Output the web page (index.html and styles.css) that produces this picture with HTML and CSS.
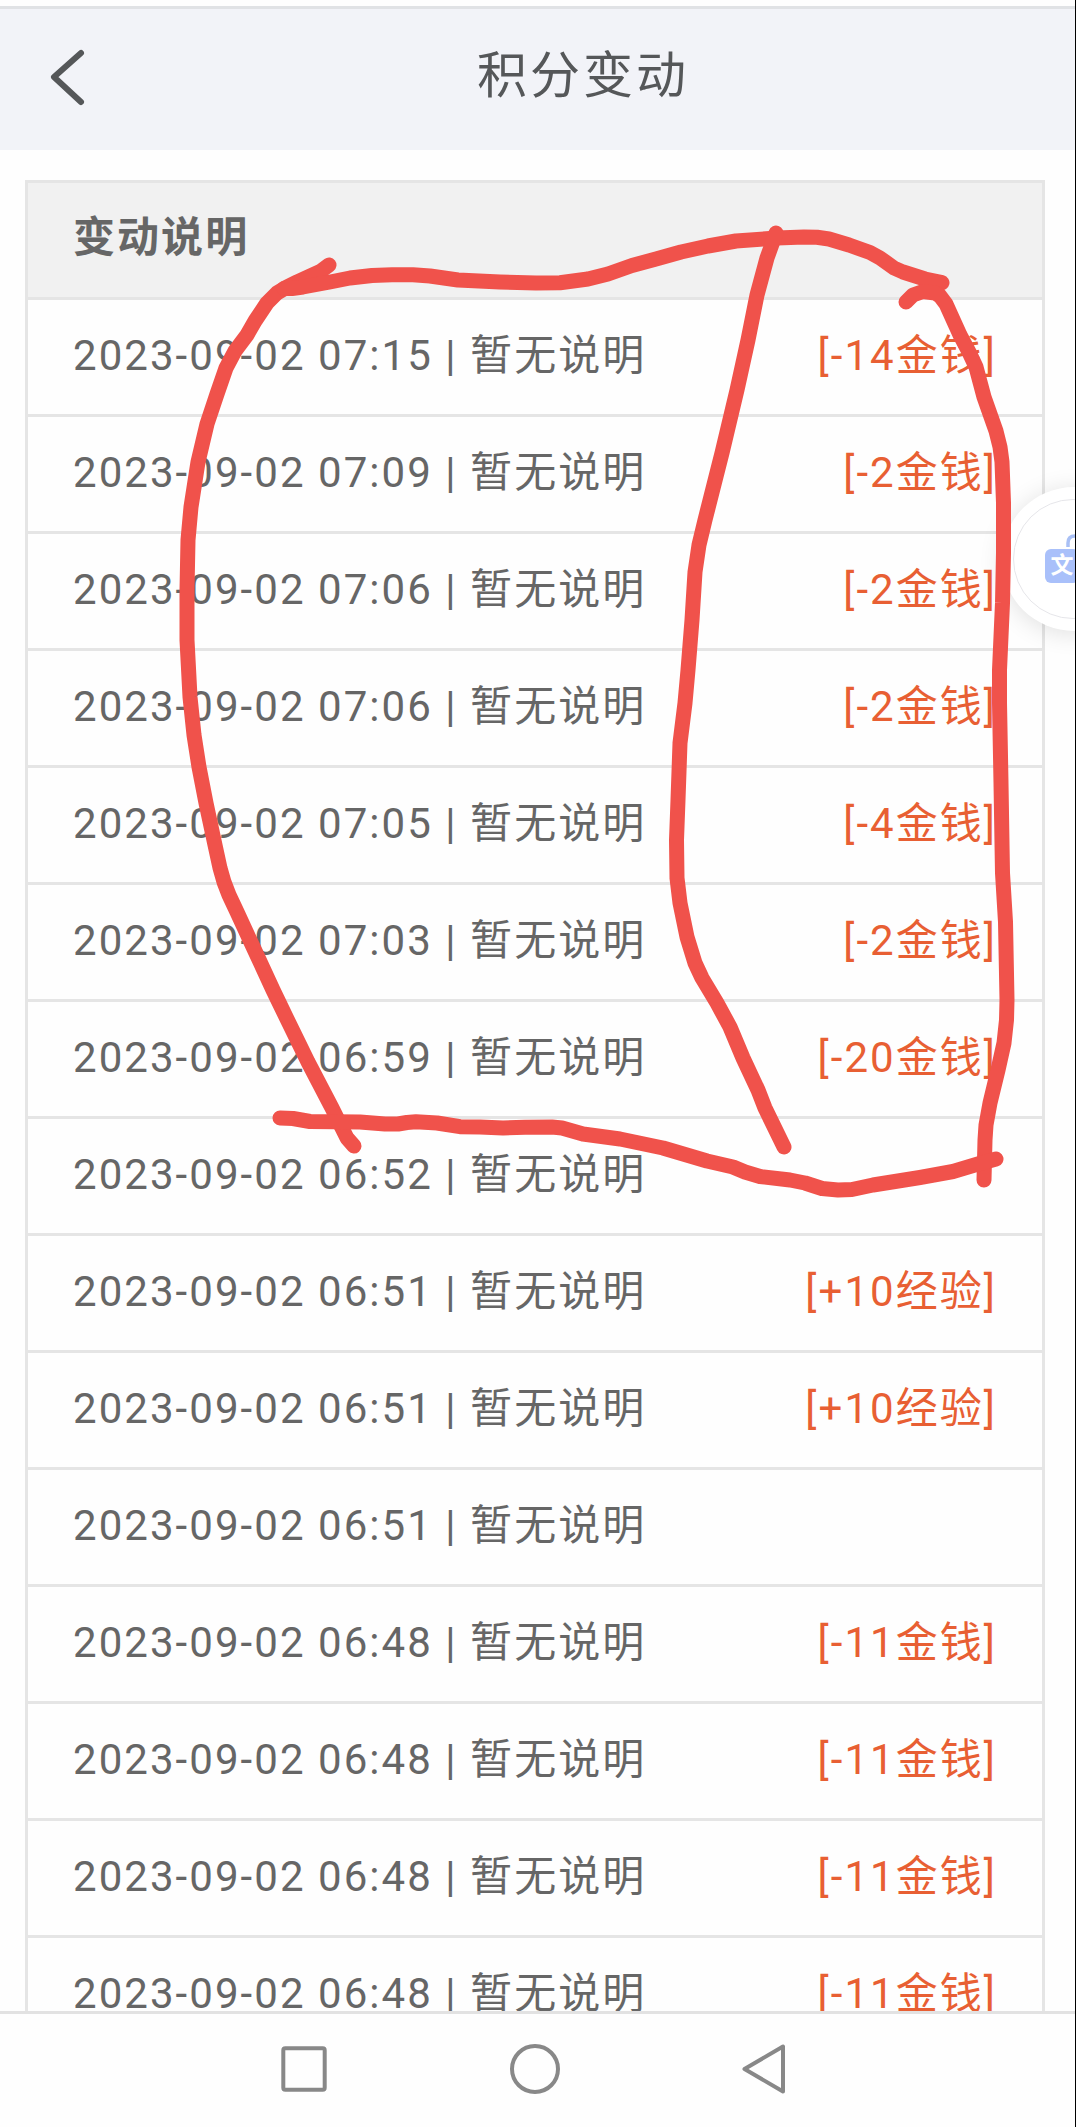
FILE: index.html
```html
<!DOCTYPE html>
<html lang="zh-CN">
<head>
    <meta charset="UTF-8">
    <meta name="viewport" content="width=device-width, initial-scale=1.0">
    <title>积分变动</title>
    <link rel="stylesheet" href="styles.css">
</head>
<body>

<div class="screen">
    <header class="topbar">
        <svg class="back" viewBox="0 0 40 60" width="40" height="60">
            <path d="M34 6 L7 30 L34 55"/>
        </svg>
        <h1>积分变动</h1>
    </header>

    <main class="content">
        <div class="log">
            <div class="row head">变动说明</div>
            <div class="row"><span>2023-09-02 07:15 | 暂无说明</span><span class="points">[-14金钱]</span></div>
            <div class="row"><span>2023-09-02 07:09 | 暂无说明</span><span class="points">[-2金钱]</span></div>
            <div class="row"><span>2023-09-02 07:06 | 暂无说明</span><span class="points">[-2金钱]</span></div>
            <div class="row"><span>2023-09-02 07:06 | 暂无说明</span><span class="points">[-2金钱]</span></div>
            <div class="row"><span>2023-09-02 07:05 | 暂无说明</span><span class="points">[-4金钱]</span></div>
            <div class="row"><span>2023-09-02 07:03 | 暂无说明</span><span class="points">[-2金钱]</span></div>
            <div class="row"><span>2023-09-02 06:59 | 暂无说明</span><span class="points">[-20金钱]</span></div>
            <div class="row"><span>2023-09-02 06:52 | 暂无说明</span></div>
            <div class="row"><span>2023-09-02 06:51 | 暂无说明</span><span class="points">[+10经验]</span></div>
            <div class="row"><span>2023-09-02 06:51 | 暂无说明</span><span class="points">[+10经验]</span></div>
            <div class="row"><span>2023-09-02 06:51 | 暂无说明</span></div>
            <div class="row"><span>2023-09-02 06:48 | 暂无说明</span><span class="points">[-11金钱]</span></div>
            <div class="row"><span>2023-09-02 06:48 | 暂无说明</span><span class="points">[-11金钱]</span></div>
            <div class="row"><span>2023-09-02 06:48 | 暂无说明</span><span class="points">[-11金钱]</span></div>
            <div class="row"><span>2023-09-02 06:48 | 暂无说明</span><span class="points">[-11金钱]</span></div>
        </div>
    </main>

    <nav class="navbar">
        <svg viewBox="0 0 54 54" width="54" height="54"><rect x="6.3" y="6.3" width="41.4" height="41.4" rx="2"/></svg>
        <svg viewBox="0 0 54 54" width="54" height="54"><circle cx="28" cy="27" r="23"/></svg>
        <svg viewBox="0 0 54 54" width="54" height="54"><path d="M7.5 27 L46 4.5 V49.5 Z"/></svg>
    </nav>

    <!-- floating translate button -->
    <div class="translate">
        <div class="ring"></div>
        <svg class="hook" viewBox="0 0 14 14" width="14" height="14"><path d="M2 13 V9 Q2 2 9 2 H14"/></svg>
        <div class="tile">文</div>
    </div>

    <!-- pen marks -->
    <svg class="marks" viewBox="0 0 1076 2127" width="1076" height="2127">
        <polyline points="329,265 321,271 310,276 297,282 287,287 277,293 267,303 255,321 247,335 235,351 226,368 217,394 207,424 198,462 191,507 188,540 187,590 187,640 190,697 194,735 199,767 206,803 215,845 220,868 224,882 229,895 237,912 255,951 273,990 287,1019 308,1062 332,1108 342,1128 347,1138 354,1146"/>
        <polyline points="284,288.5 292,288.5 303,287 330,282 350,278 372,275.5 392,274.7 413,274.7 430,276 458,280 500,282 536,283 560,282.7 588,279 608,274 632,265.5 656,259 681,252 708,246 736,241 777,238 804,237 817,237.3 829,239 849,245 870,252.5 880,258 894,268 903,272 925,279 942,282.7"/>
        <polyline points="776,233 767,258 757,295 748,340 737,390 722,453 705,520 699,545 695,572 692,620 688,670 685,703 680,743 678,800 676.5,840 677,878 680,903 687,937 695,963 702,978 717,1003 730,1027 743,1058 758,1090 765,1108 784,1147"/>
        <polyline points="906,302 913,295 923,291.5 935,293 940,296 946,304 960,335 969,352 976,367 984,397 996,431 1000,447 1002,462 1003.5,503 1003.5,553 1002.5,603 999.5,670 999.5,703 1001,783 1002.5,873 1005.5,922 1007,1000 1006.5,1020 1004,1043 998,1070 990,1103 986,1125 985,1140 984,1180"/>
        <polyline points="280,1118 293,1118.5 310,1121.5 360,1122 385,1124 398,1124 407,1122.5 416,1121.7 437,1123 460,1126.7 480,1127 503,1128 525,1127.3 552,1127 562,1128 583,1134 620,1139 663,1148 707,1161 733,1167 745,1172 760,1176.5 790,1180 805,1183 822,1188.5 838,1190 852,1189.5 873,1185 920,1177.5 953,1171.5 978,1164 996,1159"/>
    </svg>

    <div class="edge"></div>
</div>

</body>
</html>
```

FILE: styles.css
```css
body {
    margin: 0;
    background-color: #fefefe;
    font-family: Roboto, "Noto Sans CJK SC", sans-serif;
    color: #666;
}

.screen {
    position: relative;
    width: 1076px;
    height: 2127px;
    overflow: hidden;
    display: flex;
    flex-direction: column;
    box-sizing: border-box;
    padding-top: 6px;
}

.topbar {
    display: flex;
    align-items: center;
    height: 141px;
    flex-shrink: 0;
    border-top: 3px solid #e0e2e5;
    background-color: #f2f3f8;
}

.back {
    margin: 0 0 5px 47px;
    fill: none;
    stroke: #555759;
    stroke-width: 6;
    stroke-linecap: round;
    stroke-linejoin: round;
}

h1 {
    margin: 0 0 7px 390px;
    font-size: 50px;
    font-weight: 400;
    letter-spacing: 3px;
    line-height: 70px;
    color: #555759;
}

.content {
    flex: 1;
    min-height: 0;
    overflow: hidden;
    padding: 30px 31px 0 25px;
}

.log {
    border: 3px solid #e5e5e5;
    border-bottom: none;
}

.row {
    display: flex;
    justify-content: space-between;
    box-sizing: border-box;
    height: 117px;
    padding: 0 45px;
    border-bottom: 3px solid #e5e5e5;
    font-size: 42px;
    letter-spacing: 2.05px;
    line-height: 111px;
    white-space: pre;
}

.head {
    background-color: #f1f1f1;
    font-weight: 700;
    line-height: 110px;
}

.points {
    color: #e85f33;
}

.navbar {
    display: flex;
    align-items: center;
    gap: 176px;
    height: 110px;
    flex-shrink: 0;
    padding: 0 0 3px 277px;
    border-top: 3px solid #e2e2e2;
}

.navbar svg {
    fill: none;
    stroke: #888;
    stroke-width: 4;
    stroke-linejoin: round;
}

.translate {
    position: absolute;
    left: 1002px;
    top: 487px;
    width: 144px;
    height: 144px;
    border-radius: 50%;
    background-color: #fff;
    box-shadow: 0 3px 24px rgba(0, 0, 0, 0.12);
}

.ring {
    position: absolute;
    left: 11px;
    top: 12px;
    width: 118px;
    height: 118px;
    border: 1px solid #e6e6ea;
    border-radius: 50%;
}

.hook {
    position: absolute;
    left: 64px;
    top: 47px;
    fill: none;
    stroke: #a9c0f5;
    stroke-width: 3.5;
}

.tile {
    position: absolute;
    left: 43px;
    top: 62px;
    width: 34px;
    height: 34px;
    border-radius: 6px;
    background-color: #a9c0fa;
    color: #fff;
    font-size: 23px;
    font-weight: 700;
    line-height: 33px;
    text-align: center;
}

.marks {
    position: absolute;
    left: 0;
    top: 0;
    fill: none;
    stroke: #f0524b;
    stroke-width: 15;
    stroke-linecap: round;
    stroke-linejoin: round;
}

.edge {
    position: absolute;
    right: 0;
    top: 0;
    width: 1px;
    height: 2127px;
    background-color: #000;
}
```
